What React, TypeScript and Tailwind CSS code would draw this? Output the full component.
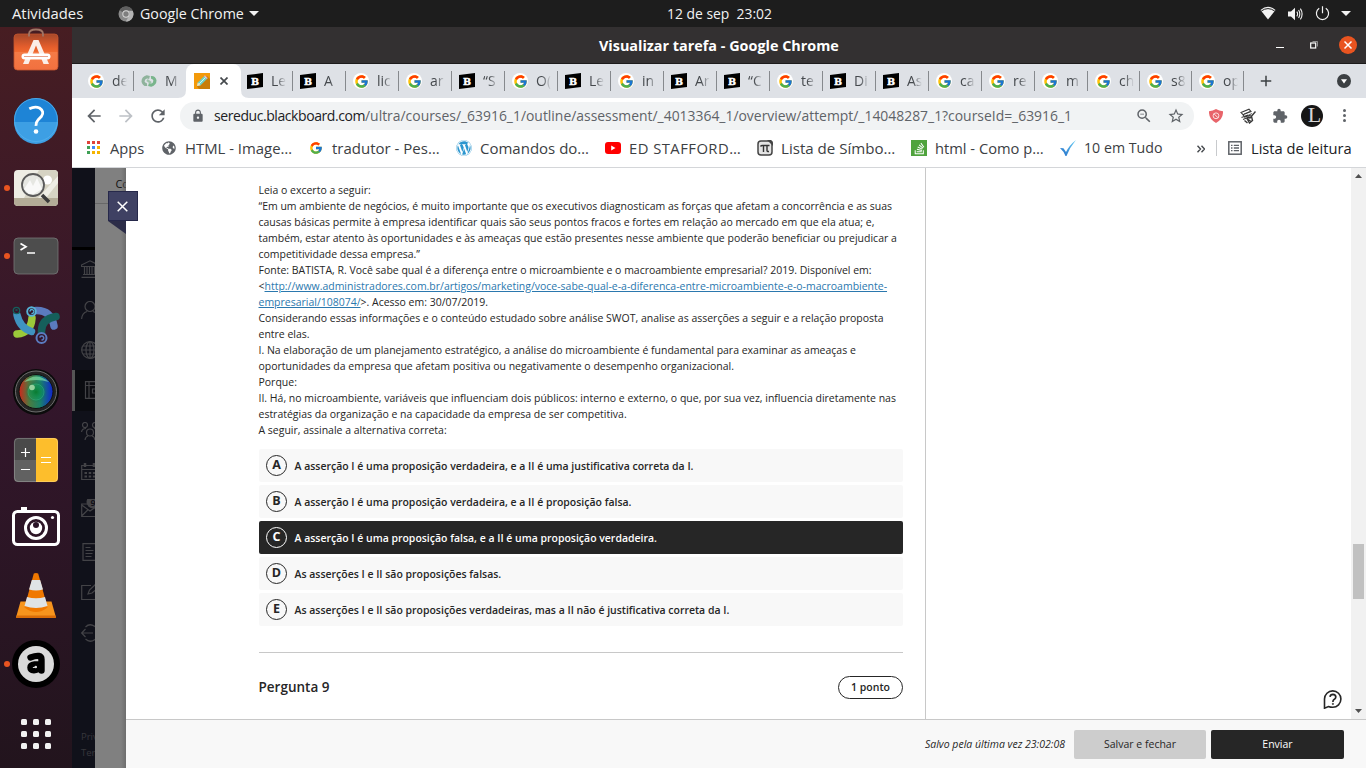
import type { ReactNode } from "react";
import { FcGoogle } from "react-icons/fc";
import { FaWordpress, FaStackOverflow, FaGlobeAmericas } from "react-icons/fa";
import {
  MdLock,
  MdRefresh,
  MdExtension,
  MdStarBorder,
  MdZoomOut,
  MdArrowBack,
  MdArrowForward,
  MdAdd,
} from "react-icons/md";

/* ---------- GNOME top bar ---------- */

function TopBar() {
  return (
    <div className="relative flex h-[27px] shrink-0 items-center bg-[#1d1d1d] text-[#f2f2f2]">
      <span className="ml-3 w-[106px] text-[14.8px] leading-none">Atividades</span>
      <svg className="h-4 w-4" viewBox="0 0 16 16">
        <circle cx="8" cy="8" r="7.5" fill="#8a8a8a" />
        <path d="M8 .5A7.5 7.5 0 0 1 14.8 4.5H8a3.6 3.6 0 0 0-3.2 2L1.6 4A7.5 7.5 0 0 1 8 .5z" fill="#5f5f5f" />
        <path d="M14.8 4.9a7.5 7.5 0 0 1-7 10.6L11 10a4 4 0 0 0 0-5.1z" fill="#b5b5b5" />
        <circle cx="8" cy="8" r="3.7" fill="#d8d8d8" />
        <circle cx="8" cy="8" r="2.7" fill="#7e7e7e" />
      </svg>
      <span className="ml-1.5 w-[104px] pt-px text-[14.25px] leading-none whitespace-nowrap">Google Chrome</span>
      <svg className="ml-[5px] h-[5px] w-[10px]" viewBox="0 0 10 5">
        <path d="M0 0h10L5 5z" fill="#f2f2f2" />
      </svg>
      <span className="absolute left-[667px] text-[13.9px] leading-none whitespace-pre">12 de sep  23:02</span>
      <div className="absolute right-[15px] flex items-center">
        <svg className="h-[15px] w-4" viewBox="0 0 16 15">
          <path d="M0.5 4Q8-2.4 15.5 4L8 13.5z" fill="#f2f2f2" />
          <path d="M1.3 5Q8 .2 14.7 5" fill="none" stroke="#1d1d1d" strokeWidth="1" />
        </svg>
        <svg className="ml-[12px] h-[14px] w-[15px]" viewBox="0 0 15 14">
          <path d="M0 4.5h3L7 .8v12.4L3 9.5H0z" fill="#f2f2f2" />
          <path d="M8.8 4.6q1.6 2.4 0 4.8M10.6 3q2.4 4 0 8M12.4 1.6q3.4 5.4 0 10.8" fill="none" stroke="#f2f2f2" strokeWidth="1.1" />
        </svg>
        <svg className="ml-[12px] h-[15px] w-[15px]" viewBox="0 0 15 15">
          <path d="M4.2 2.3a6.1 6.1 0 1 0 6.6 0M7.5.3v7" fill="none" stroke="#f2f2f2" strokeWidth="1.2" />
        </svg>
        <svg className="ml-[11px] h-[5px] w-[10px]" viewBox="0 0 10 5">
          <path d="M0 0h10L5 5z" fill="#f2f2f2" />
        </svg>
      </div>
    </div>
  );
}

/* ---------- Dock ---------- */

function DockItem({ children, running = false }: { children: ReactNode; running?: boolean }) {
  return (
    <div className="relative flex h-[68px] shrink-0 items-center justify-center">
      {running && <span className="absolute top-[31px] left-1 h-1.5 w-1.5 rounded-full bg-[#e95420]" />}
      <svg className="h-12 w-12" viewBox="0 0 48 48">
        {children}
      </svg>
    </div>
  );
}

function Dock() {
  return (
    <div className="flex w-[72px] shrink-0 flex-col overflow-hidden bg-linear-to-b from-[#471d22] via-[#33162b] via-50% to-[#22141d]">
      <svg className="mx-auto h-[59px] w-12 shrink-0" viewBox="0 0 48 59">
        <defs>
          <linearGradient id="bag" x1="0" y1="0" x2="0" y2="1">
            <stop offset="0" stopColor="#a5482a" />
            <stop offset=".35" stopColor="#e35d2c" />
            <stop offset=".5" stopColor="#f0692f" />
            <stop offset=".51" stopColor="#f47b46" />
            <stop offset="1" stopColor="#f2703f" />
          </linearGradient>
        </defs>
        <rect x="2" y="7" width="44" height="36" rx="3.5" fill="url(#bag)" stroke="#c5552e" strokeWidth=".8" />
        <path d="M17 9.500V7q0-4.500 7-4.500T31 7v2.500" fill="none" stroke="#a07565" strokeWidth="1.800" />
        <path d="M21.500 13h5L37 37h-5.500L24 18.500 16.500 37H11z" fill="#fbeee8" />
        <rect x="9.500" y="26.500" width="29" height="6" rx="3" fill="#fff" />
        <path d="M12 29.500h24" stroke="#e9a18a" strokeWidth="1" />
      </svg>
      <DockItem>
        <circle cx="24" cy="24" r="22" fill="#1e84d6" />
        <path d="M2 26h44a22 22 0 0 1-44 0z" fill="#3d9fe4" />
        <circle cx="24" cy="24" r="21.500" fill="none" stroke="#54b1ee" strokeWidth=".8" />
        <path d="M17.300 12.800Q23 9.800 27.500 12 32.800 15.500 29.500 20.300L26 24Q23.800 26.200 24 29.800" fill="none" stroke="#fff" strokeWidth="2.800" />
        <circle cx="24" cy="35.500" r="2.300" fill="#fff" />
      </DockItem>
      <DockItem running>
        <rect x="2" y="6" width="44" height="36" rx="4" fill="#eeede4" />
        <path d="M27 6h15q4 0 4 4v2L26 34H12z" fill="#d6d3c3" />
        <path d="M34 34L46 19v15z" fill="#d6d3c3" />
        <path d="M2 34h44v4q0 4-4 4H6q-4 0-4-4z" fill="#b3ac97" />
        <circle cx="35.500" cy="16" r="4.500" fill="#fff" />
        <circle cx="21" cy="21" r="11" fill="#e6e7e2" stroke="#5a5a5a" strokeWidth="1.800" />
        <path d="M12 25l6-9 3 6 4-8 5 11-8 5h-5z" fill="#fff" opacity=".75" />
        <path d="M30 31l7 7" stroke="#3b3b3b" strokeWidth="3.600" />
      </DockItem>
      <DockItem running>
        <rect x="2" y="6" width="44" height="36" rx="4" fill="#4d4d4d" stroke="#777" strokeWidth=".8" />
        <path d="M8.500 11.500l5.500 3.200-5.500 3.200" fill="none" stroke="#fff" strokeWidth="1.700" />
        <path d="M15 21h8" stroke="#fff" strokeWidth="1.500" />
      </DockItem>
      <DockItem>
        <g fill="none" strokeLinecap="round" transform="translate(0 -3)">
          <path d="M5 37Q19 36 20 21" stroke="#9bc93a" strokeWidth="7.500" />
          <path d="M24 13.500Q39 13 42 29" stroke="#5b7bbf" strokeWidth="7.500" />
          <path d="M5 18Q8 31 19.500 34.500" stroke="#3f93c0" strokeWidth="7.500" />
          <path d="M44 19.500Q29 22 29.500 35" stroke="#155f5b" strokeWidth="7.500" />
          <circle cx="19.500" cy="14.500" r="4.300" fill="#33162b" stroke="#55b4d8" strokeWidth="1.900" />
          <path d="M18 14a2 2 0 1 1 2 2.500" stroke="#55b4d8" strokeWidth="1.300" />
          <circle cx="29.500" cy="41" r="5" fill="#33162b" stroke="#5b7bbf" strokeWidth="2" />
          <path d="M28 40a2 2 0 1 1 2 3" stroke="#5b7bbf" strokeWidth="1.500" />
          <circle cx="4.500" cy="13.500" r="3.200" fill="#33162b" stroke="#155f5b" strokeWidth="1.300" />
          <path d="M4 13h1" stroke="#155f5b" strokeWidth="1.500" />
        </g>
      </DockItem>
      <DockItem>
        <defs>
          <linearGradient id="lensHue" x1="0" y1="0" x2="1" y2="0">
            <stop offset="0" stopColor="#d0241a" />
            <stop offset=".3" stopColor="#4c7a40" />
            <stop offset=".62" stopColor="#18836a" />
            <stop offset="1" stopColor="#1023cf" />
          </linearGradient>
          <radialGradient id="lensCore">
            <stop offset="0" stopColor="#0a7a30" />
            <stop offset=".6" stopColor="#0a9a50" stopOpacity=".5" />
            <stop offset="1" stopColor="#0a6040" stopOpacity="0" />
          </radialGradient>
        </defs>
        <circle cx="24" cy="24" r="23" fill="#0b0b0b" />
        <circle cx="24" cy="23.500" r="20.500" fill="#242424" stroke="#777" strokeWidth=".9" />
        <circle cx="24" cy="23.500" r="17" fill="url(#lensHue)" stroke="#111" strokeWidth="1" />
        <path d="M12 14Q24 3 37 14 24 10 12 14z" fill="#8df0b0" opacity=".6" />
        <circle cx="24" cy="24" r="11" fill="url(#lensCore)" />
        <circle cx="24" cy="24" r="8" fill="none" stroke="#2fb880" strokeOpacity=".5" strokeWidth="1" />
        <circle cx="20" cy="19.500" r="2.800" fill="#bfe8b8" opacity=".75" />
      </DockItem>
      <DockItem>
        <path d="M24 2H6q-4 0-4 4v18h22z" fill="#4a4a4a" />
        <path d="M2 24h22v22H6q-4 0-4-4z" fill="#616161" />
        <path d="M24 2h18q4 0 4 4v36q0 4-4 4H24z" fill="#fdbe2c" />
        <rect x="2.400" y="2.400" width="43.200" height="43.200" rx="4" fill="none" stroke="#fff" strokeOpacity=".3" strokeWidth=".8" />
        <path d="M9 16.500h9M13.500 12v9M9 33.500h9M29 21.500h10M29 26.500h10" stroke="#fff" strokeWidth="1.200" />
      </DockItem>
      <DockItem>
        <g transform="translate(0 -2)">
          <rect x="1.500" y="9.500" width="45" height="33" rx="4" fill="none" stroke="#fff" strokeWidth="3" />
          <rect x="9" y="5" width="6" height="4" fill="#fff" />
          <circle cx="24" cy="26" r="10.500" fill="none" stroke="#fff" strokeWidth="3" />
          <circle cx="24" cy="26" r="6.200" fill="#fff" />
          <circle cx="24" cy="23" r="3" fill="#2b1427" />
          <circle cx="40.500" cy="15.500" r="1.600" fill="#fff" />
        </g>
      </DockItem>
      <DockItem>
        <path d="M8.500 29.500h31l4.500 16H4z" fill="#f7941d" />
        <path d="M4.500 43.500h39l.500 2.500H4z" fill="#d96c08" />
        <path d="M21.800 1.500q2.200-1.200 4.400 0l9.300 34q-11.500 9-23 0z" fill="#f07800" />
        <path d="M19.800 8h8.400l2.800 9.500q-7 1.800-14 0z" fill="#dfe3e6" />
        <path d="M15 25q9 2.500 18 0l2.500 9q-11.500 4-23 0z" fill="#dfe3e6" />
      </DockItem>
      <DockItem running>
        <circle cx="24" cy="24" r="24" fill="#000" />
        <circle cx="24" cy="24" r="18" fill="#dadada" />
        <path d="M18.500 17.500Q29.500 13.500 29.500 19.500V30.500" fill="none" stroke="#000" strokeWidth="6.400" strokeLinecap="round" />
        <path d="M28.500 24H22.500Q18 24.500 18 27.500t4 3.200Q26 30.700 27.500 28" fill="none" stroke="#000" strokeWidth="5.500" strokeLinecap="round" />
        <circle cx="23.800" cy="27" r="1.200" fill="#dadada" />
      </DockItem>
      <div className="mx-auto mt-[21px] grid grid-cols-3 gap-1.5">
        {Array.from({ length: 9 }, (_, i) => (
          <span key={i} className="h-1.5 w-1.5 rounded-[1.5px] bg-[#f2f2f2]" />
        ))}
      </div>
    </div>
  );
}

/* ---------- Browser chrome ---------- */

function TitleBar() {
  return (
    <div className="flex h-[37px] shrink-0 items-center border-b border-[#1c1b1b] bg-[#333031]">
      <span className="ml-[527px] w-[240px] pt-0.5 text-[14.4px] leading-none font-bold whitespace-nowrap text-white">
        Visualizar tarefa - Google Chrome
      </span>
      <span className="mt-1 ml-[437px] h-px w-2 bg-white" />
      <svg className="ml-[26px] h-2 w-2" viewBox="0 0 8 8">
        <rect x=".7" y="2" width="5" height="5" fill="none" stroke="#fff" strokeWidth="1.200" />
        <path d="M2.500.5h5v5" fill="none" stroke="#aaa" strokeWidth=".8" />
      </svg>
      <svg className="ml-[21px] h-[18px] w-[18px]" viewBox="0 0 18 18">
        <circle cx="9" cy="9" r="9" fill="#e95420" />
        <path d="M5.500 5.500l7 7M12.500 5.500l-7 7" stroke="#fff" strokeWidth="1.500" />
      </svg>
    </div>
  );
}

function GoogleMark() {
  return (
    <span className="flex h-4 w-4 shrink-0 items-center justify-center rounded-full bg-white">
      <FcGoogle className="h-[15px] w-[15px]" />
    </span>
  );
}

function BrainlyMark() {
  return (
    <svg className="h-4 w-4 shrink-0" viewBox="0 0 16 16">
      <path d="M0 2L16 0v14L0 16z" fill="#000" />
      <text x="8" y="11.500" textAnchor="middle" fontFamily="DejaVu Serif" fontWeight="bold" fontSize="9.500" fill="#fff" stroke="#fff" strokeWidth=".4">
        B
      </text>
    </svg>
  );
}

function LoopMark() {
  return (
    <svg className="h-4 w-4 shrink-0" viewBox="0 0 16 16">
      <g fill="none" strokeWidth="3">
        <path d="M8.500 4.500L6 3.800Q2 5 2 8.500q1 3.500 4 3" stroke="#8fb39c" />
        <path d="M7.500 11.500l2.500.7q4-1.200 4-4.700-1-3.500-4-3" stroke="#79b58c" />
        <path d="M6 7l4 3" stroke="#9fc3aa" strokeWidth="2.200" />
      </g>
    </svg>
  );
}

const tabs: { icon: "g" | "b" | "m" | "active"; label: string }[] = [
  { icon: "g", label: "de" },
  { icon: "m", label: "M" },
  { icon: "active", label: "" },
  { icon: "b", label: "Le" },
  { icon: "b", label: "A" },
  { icon: "g", label: "lic" },
  { icon: "g", label: "ar" },
  { icon: "b", label: "“S" },
  { icon: "g", label: "O(" },
  { icon: "b", label: "Le" },
  { icon: "g", label: "in" },
  { icon: "b", label: "Ar" },
  { icon: "b", label: "“C" },
  { icon: "g", label: "te" },
  { icon: "b", label: "Di" },
  { icon: "b", label: "As" },
  { icon: "g", label: "ca" },
  { icon: "g", label: "re" },
  { icon: "g", label: "m" },
  { icon: "g", label: "ch" },
  { icon: "g", label: "s8" },
  { icon: "g", label: "op" },
];

function TabStrip() {
  return (
    <div className="flex h-[34px] shrink-0 items-center bg-[#dee1e6] pl-[9px]">
      {tabs.map((t, i) =>
        t.icon === "active" ? (
          <div key={i} className="relative -mr-px -ml-px flex h-full w-[55px] items-center rounded-t-lg bg-white pl-2">
            <svg className="absolute bottom-0 -left-2 h-2 w-2" viewBox="0 0 8 8">
              <path d="M8 0v8H0q8 0 8-8z" fill="#fff" />
            </svg>
            <svg className="absolute -right-2 bottom-0 h-2 w-2" viewBox="0 0 8 8">
              <path d="M0 0v8h8q-8 0-8-8z" fill="#fff" />
            </svg>
            <svg className="h-4 w-4" viewBox="0 0 16 16">
              <path d="M0 0h16v16H0z" fill="#f39a0a" />
              <path d="M3 13.500L5 16h11V6l-3-3z" fill="#c87d09" />
              <path d="M3 13l.8-3.600 7-7 2.800 2.800-7 7z" fill="#6fd0c4" />
              <path d="M3 13l.8-3.600 2.800 2.800z" fill="#f7e2bd" />
              <path d="M10 3.200l.9-.9 2.800 2.800-.9.900z" fill="#f4a8b4" />
              <path d="M5.200 10.800l6.400-6.400" stroke="#d8f6f1" strokeWidth="1" />
            </svg>
            <svg className="ml-[10px] h-2 w-2" viewBox="0 0 8 8">
              <path d="M.5.5l7 7M7.500.5l-7 7" stroke="#45494d" strokeWidth="1.700" />
            </svg>
          </div>
        ) : (
          <div
            key={i}
            className={
              (i > 18 ? "w-[52px] " : "w-[53px] ") +
              (i === 1 ? "" : "border-r border-[#86898d] ") +
              "flex h-5 shrink-0 items-center pl-[7px]"
            }
          >
            {t.icon === "g" && <GoogleMark />}
            {t.icon === "b" && <BrainlyMark />}
            {t.icon === "m" && <LoopMark />}
            <span className="ml-2 w-[15px] overflow-hidden mask-r-from-40% text-[14px] leading-5 whitespace-nowrap text-[#45494d]">
              {t.label}
            </span>
          </div>
        ),
      )}
      <MdAdd className="ml-[13px] h-[18px] w-[18px] text-[#3c4043]" />
      <svg className="ml-[62px] h-[14px] w-[14px]" viewBox="0 0 14 14">
        <circle cx="7" cy="7" r="7" fill="#3c4043" />
        <path d="M4 5.200h6L7 9.500z" fill="#fff" />
      </svg>
    </div>
  );
}

function Toolbar() {
  return (
    <div className="flex h-[35px] shrink-0 items-center bg-white text-[#5f6368]">
      <MdArrowBack className="ml-3 h-5 w-5" />
      <MdArrowForward className="ml-3 h-5 w-5 text-[#bdc1c6]" />
      <MdRefresh className="ml-3 h-5 w-5" />
      <div className="ml-3 flex h-7 w-[1014px] items-center rounded-full bg-[#f1f3f4]">
        <MdLock className="ml-[11px] h-[14px] w-[14px]" />
        <span className="ml-[9px] w-[151px] text-sm leading-none tracking-[-0.43px] whitespace-nowrap text-[#202124]">
          sereduc.blackboard.com
        </span>
        <span className="w-[706px] text-[13.91px] leading-none whitespace-nowrap">
          /ultra/courses/_63916_1/outline/assessment/_4013364_1/overview/attempt/_14048287_1?courseId=_63916_1
        </span>
        <MdZoomOut className="ml-[64px] h-[18px] w-[18px]" />
        <MdStarBorder className="ml-[14px] h-[18px] w-[18px]" />
      </div>
      <svg className="ml-[15px] h-[14px] w-[14px]" viewBox="0 0 14 14">
        <path d="M7 0q3 2 7 2.200Q14.500 10 7 14-.5 10 0 2.200 4 2 7 0z" fill="#e8646a" />
        <circle cx="7" cy="6.800" r="2.900" fill="none" stroke="#fbdcdc" strokeWidth="1" />
        <path d="M5 4.800l4 4" stroke="#fbdcdc" strokeWidth="1" />
      </svg>
      <svg className="ml-[17px] h-4 w-4" viewBox="0 0 16 16" fill="none" stroke="#3a3a3a">
        <path d="M1 4.500L9 1.200l2 2.300-8 3.200zM3 6.700l1.500 2.500L11 7M1.500 9.500L8 7M3 11.500L9 9" strokeWidth="1.100" />
        <path d="M4 6l6-2.500M5.500 8.500L12 5.500" strokeWidth=".8" />
        <path d="M15.500 3.500L9.500 10.500M10 9L7 10.500l2.500 4.500 3-2.500L11.500 8.500M7.500 11l3.500 2.500M4.500 12.500l3 2.500" strokeWidth="1.400" />
      </svg>
      <MdExtension className="ml-4 h-4 w-4" />
      <svg className="ml-[13px] h-[22px] w-[22px]" viewBox="0 0 22 22">
        <circle cx="11" cy="11" r="11" fill="#161616" />
        <text x="13.500" y="17" fontFamily="Liberation Serif" fontSize="22" textAnchor="middle" fill="#d8d8d8">
          L
        </text>
      </svg>
      <div className="ml-5 flex flex-col gap-[2px]">
        <span className="h-[3px] w-[3px] rounded-full bg-[#5f6368]" />
        <span className="h-[3px] w-[3px] rounded-full bg-[#5f6368]" />
        <span className="h-[3px] w-[3px] rounded-full bg-[#5f6368]" />
      </div>
    </div>
  );
}

const appColors = [
  "bg-[#e0423a]", "bg-[#e0423a]", "bg-[#e0423a]",
  "bg-[#3fa055]", "bg-[#4285f4]", "bg-[#f5b400]",
  "bg-[#3fa055]", "bg-[#f5b400]", "bg-[#f5b400]",
];

function BookmarksBar() {
  const label = "pt-px whitespace-nowrap text-[14.7px] leading-none";
  return (
    <div className="flex h-[35px] shrink-0 items-center border-b border-[#d4d6d9] bg-white pb-1 pl-[15px] text-[#3c4043]">
      <div className="flex w-[75px] items-center gap-[10px]">
        <div className="grid grid-cols-3 gap-[2px]">
          {appColors.map((c, i) => (
            <span key={i} className={"h-[3px] w-[3px] " + c} />
          ))}
        </div>
        <span className="pt-px text-[14.700px] leading-none">Apps</span>
      </div>
      <div className="flex w-[147px] items-center gap-[9px]">
        <FaGlobeAmericas className="h-[14px] w-[14px] text-[#5f6368]" />
        <span className="pt-px text-[14.900px] leading-none whitespace-nowrap">HTML - Image…</span>
      </div>
      <div className="flex w-[147px] items-center gap-[9px]">
        <FcGoogle className="h-[14px] w-[14px]" />
        <span className="pt-px text-[15px] leading-none whitespace-nowrap">tradutor - Pes…</span>
      </div>
      <div className="flex w-[149px] items-center gap-2">
        <FaWordpress className="h-4 w-4 text-[#2b96cf]" />
        <span className="pt-px text-[15px] leading-none whitespace-nowrap">Comandos do…</span>
      </div>
      <div className="flex w-[152px] items-center gap-2">
        <svg className="h-3 w-4" viewBox="0 0 16 12">
          <rect width="16" height="12" rx="3" fill="#f00" />
          <path d="M6.200 3.500L10.500 6l-4.300 2.500z" fill="#fff" />
        </svg>
        <span className="pt-px text-[14.800px] leading-none tracking-[0.46px] whitespace-nowrap">ED STAFFORD…</span>
      </div>
      <div className="flex w-[154px] items-center gap-2">
        <svg className="h-4 w-4" viewBox="0 0 16 16">
          <rect x="1" y="1" width="14" height="14" rx="3" fill="#e4e4e4" stroke="#444" strokeWidth="1.500" />
          <path d="M10 0h4q2 1 2 3v3z" fill="#444" />
          <path d="M3.500 6.500Q4 5.500 5.500 5.500h7M6.500 5.500V12M10 5.500v5q0 1.200 2 1" fill="none" stroke="#333" strokeWidth="1.400" />
        </svg>
        <span className="pt-px text-[15.100px] leading-none whitespace-nowrap">Lista de Símbo…</span>
      </div>
      <div className="flex w-[149px] items-center gap-2">
        <span className="flex h-4 w-4 items-center justify-center bg-[#4fa33d]">
          <FaStackOverflow className="h-[13px] w-[13px] text-white" />
        </span>
        <span className={label}>html - Como p…</span>
      </div>
      <div className="flex w-[137px] items-center gap-2">
        <svg className="h-4 w-4" viewBox="0 0 16 16">
          <defs>
            <linearGradient id="tick" x1="0" y1="1" x2="1" y2="0">
              <stop offset="0.2" stopColor="#2f7fd0" />
              <stop offset="1" stopColor="#6fd3f7" />
            </linearGradient>
          </defs>
          <path d="M0 8l3.500.3L6 12Q9.500 5 16 0 10 7 6.500 16q-.5.500-1 0Q3.500 11 0 8z" fill="url(#tick)" />
        </svg>
        <span className="pt-px text-[14.200px] leading-none whitespace-nowrap">10 em Tudo</span>
      </div>
      <svg className="mt-px h-2 w-2" viewBox="0 0 8 8">
        <path d="M.5.800L3.500 4 .5 7.200M4.500.8L7.500 4l-3 3.200" fill="none" stroke="#45494d" strokeWidth="1.400" />
      </svg>
      <span className="ml-[11px] h-4 w-px bg-[#c8cacd]" />
      <svg className="ml-[11px] h-[14px] w-[14px]" viewBox="0 0 14 14">
        <rect x=".8" y=".8" width="12.400" height="12.400" fill="none" stroke="#5f6368" strokeWidth="1.500" />
        <path d="M3 4.300h1.500M3 7h1.500M3 9.700h1.500M5.800 4.300H11M5.800 7H11M5.800 9.700H11" stroke="#5f6368" strokeWidth="1.300" />
      </svg>
      <span className="ml-[9px] pt-px text-[14.7px] leading-none whitespace-nowrap text-[#202124]">Lista de leitura</span>
    </div>
  );
}

/* ---------- Page ---------- */

function NavGlyph({ children, active = false }: { children: ReactNode; active?: boolean }) {
  return (
    <div className={"flex h-[40.4px] shrink-0 items-center " + (active ? "border-l-[3px] border-[#555] bg-[#0b0c11] pl-[9px]" : "pl-[9px]")}>
      <svg className="h-[18px] w-[18px] shrink-0" viewBox="0 0 18 18" fill="none" stroke="#434347" strokeWidth="1.2">
        {children}
      </svg>
    </div>
  );
}

function PageBackdrop() {
  return (
    <>
      <div className="flex w-[23px] shrink-0 flex-col overflow-hidden bg-[#10111a]">
        <div className="mb-[-1px] h-[82px] shrink-0 border-b-[3px] border-black" />
        <NavGlyph>
          <path d="M.5 5L9 .8 17.500 5v1.500H.5zM2 14.500h14M.5 17.300h17M3.500 7v7M6 7v7M8.500 7v7M11 7v7M13.500 7v7" />
        </NavGlyph>
        <NavGlyph>
          <circle cx="9" cy="5.500" r="5" />
          <path d="M.6 18Q1 12 6 10.500M17.400 18Q17 12 12 10.500" />
        </NavGlyph>
        <NavGlyph>
          <circle cx="9" cy="9" r="8.300" />
          <ellipse cx="9" cy="9" rx="4" ry="8.300" />
          <path d="M9 .7v16.600M.7 9h16.600M2 5h14M2 13h14" />
        </NavGlyph>
        <NavGlyph active>
          <path d="M1.500.7H17v16.600H1.500zM5 .7v16.600M2 4.500h15M16 8H8.500v4H16" />
        </NavGlyph>
        <NavGlyph>
          <circle cx="4" cy="3" r="2.500" />
          <circle cx="14" cy="3" r="2.500" />
          <circle cx="9" cy="10.500" r="3.500" />
          <path d="M.5 10Q1 6.500 5 6.500M17.500 10Q17 6.500 13 6.500M4 18q.5-3.500 3-4M14 18q-.5-3.500-3-4" />
        </NavGlyph>
        <NavGlyph>
          <path d="M.7 3.500h16.600v14H.7zM.7 7.500h16.600" />
          <path d="M4 1v4M13 1v4" strokeWidth="2.500" />
          <path d="M3.500 11h11M3.500 14.500h11" strokeWidth="2" strokeDasharray="2.500 1.700" />
        </NavGlyph>
        <div className="relative -top-1">
          <NavGlyph>
            <path d="M.7 5h16.600v12.500H.7zM.7 6L9 12l8.300-6M.7 17l6-6" />
            <circle cx="12" cy="3" r="6.500" fill="#434347" stroke="none" />
            <text x="9.500" y="6.500" fontSize="9" fontWeight="bold" fill="#10111a" stroke="none">9</text>
          </NavGlyph>
        </div>
        <NavGlyph>
          <path d="M2 .7h14v16.600H2zM4.500 4.500h5M4.500 7.500h8M4.500 10.500h7M4.500 13.500h6" />
        </NavGlyph>
        <NavGlyph>
          <path d="M10 2.500H.7v14H15V10M7 11l1.500-4L15 1l3 3-7 6z" />
        </NavGlyph>
        <NavGlyph>
          <path d="M.7 9H12M4.500 5L.7 9l3.800 4M4.500 3Q9-1.500 14.500 3M4.500 15q4.500 4.500 10 0" />
        </NavGlyph>
        <div className="mt-auto pb-[7px] pl-[9px] text-[9.500px] leading-4 text-[#37373c]">
          <div className="w-10">Priva</div>
          <div className="w-10">Term</div>
        </div>
      </div>
      <div className="relative w-[31px] shrink-0 bg-[#808080]">
        <div className="h-9 overflow-hidden border-b border-[#686868] pt-[9px] pl-[20.500px] text-[11px] leading-[14px] tracking-[-0.3px] whitespace-nowrap text-[#111]">
          Conteúdo
        </div>
        <div className="absolute inset-y-0 right-0 w-[5px] bg-linear-to-r from-transparent to-[#666]/70" />
        <svg className="absolute top-[53px] left-[13px] h-[13px] w-[18px]" viewBox="0 0 18 13">
          <path d="M0 0h18v13z" fill="#2c2d48" />
        </svg>
        <div className="absolute top-[23px] left-[13px] z-10 flex h-[30px] w-[30px] items-center justify-center border border-[#26284a] bg-[#3f4163]">
          <svg className="mr-px h-[11px] w-[11px]" viewBox="0 0 11 11">
            <path d="M.7.7l9.600 9.600M10.300.7L.7 10.300" stroke="#fff" strokeWidth="1.500" />
          </svg>
        </div>
      </div>
    </>
  );
}

const link = "text-[#2b78ae] underline underline-offset-1";

function Question() {
  return (
    <div className="pt-[14px] text-[10.49px] leading-4 whitespace-nowrap text-[#262626]">
      <p>Leia o excerto a seguir:</p>
      <p>“Em um ambiente de negócios, é muito importante que os executivos diagnosticam as forças que afetam a concorrência e as suas</p>
      <p>causas básicas permite à empresa identificar quais são seus pontos fracos e fortes em relação ao mercado em que ela atua; e,</p>
      <p>também, estar atento às oportunidades e às ameaças que estão presentes nesse ambiente que poderão beneficiar ou prejudicar a</p>
      <p>competitividade dessa empresa.”</p>
      <p>Fonte: BATISTA, R. Você sabe qual é a diferença entre o microambiente e o macroambiente empresarial? 2019. Disponível em:</p>
      <p>
        &lt;<a className={link}>http://www.administradores.com.br/artigos/marketing/voce-sabe-qual-e-a-diferenca-entre-microambiente-e-o-macroambiente-</a>
      </p>
      <p>
        <a className={link}>empresarial/108074/</a>&gt;. Acesso em: 30/07/2019.
      </p>
      <p>Considerando essas informações e o conteúdo estudado sobre análise SWOT, analise as asserções a seguir e a relação proposta</p>
      <p>entre elas.</p>
      <p>I. Na elaboração de um planejamento estratégico, a análise do microambiente é fundamental para examinar as ameaças e</p>
      <p>oportunidades da empresa que afetam positiva ou negativamente o desempenho organizacional.</p>
      <p>Porque:</p>
      <p>II. Há, no microambiente, variáveis que influenciam dois públicos: interno e externo, o que, por sua vez, influencia diretamente nas</p>
      <p>estratégias da organização e na capacidade da empresa de ser competitiva.</p>
      <p>A seguir, assinale a alternativa correta:</p>
    </div>
  );
}

const options = [
  ["A", "A asserção I é uma proposição verdadeira, e a II é uma justificativa correta da I."],
  ["B", "A asserção I é uma proposição verdadeira, e a II é proposição falsa."],
  ["C", "A asserção I é uma proposição falsa, e a II é uma proposição verdadeira."],
  ["D", "As asserções I e II são proposições falsas."],
  ["E", "As asserções I e II são proposições verdadeiras, mas a II não é justificativa correta da I."],
];

function Options() {
  return (
    <div className="mt-[11px] flex flex-col gap-[3px]">
      {options.map(([letter, text]) => (
        <div
          key={letter}
          className={
            "flex h-[33px] items-center rounded-[2px] pl-[7px] font-semibold " +
            (letter === "C" ? "bg-[#262626] text-white" : "bg-[#f8f8f8] text-[#262626]")
          }
        >
          <span className="flex h-[21px] w-[21px] items-center justify-center rounded-full border border-current pl-px text-[12.500px] leading-none font-bold">
            {letter}
          </span>
          <span className="ml-2 pt-px text-[10.48px] leading-4 whitespace-nowrap">{text}</span>
        </div>
      ))}
    </div>
  );
}

function Assessment() {
  return (
    <div className="flex min-w-0 grow flex-col bg-white">
      <div className="flex h-[551px] shrink-0 overflow-hidden">
        <div className="w-[800px] shrink-0 border-r border-[#c8c8c8] pr-[22px] pl-[132.5px]">
          <Question />
          <Options />
          <div className="mt-[26px] flex h-[69px] items-center justify-between border-t border-[#c8c8c8]">
            <span className="pt-0.5 text-[13.500px] leading-none font-semibold text-[#262626]">Pergunta 9</span>
            <span className="flex h-[23px] w-[65px] items-center justify-center rounded-full border border-[#262626] text-[10.500px] leading-none font-semibold text-[#262626]">
              1 ponto
            </span>
          </div>
        </div>
        <div className="flex grow items-end justify-end">
          <svg className="mr-[9px] mb-[10px] h-[19px] w-[19px]" viewBox="0 0 19 19" fill="none" stroke="#262626">
            <path d="M1.500 18.200V9A8.200 8.200 0 1 1 9.800 17.300Q7.400 17.300 5.400 16.500L1.500 18.200z" strokeWidth="1.600" />
            <path d="M7 6.800Q7.400 4.300 9.900 4.300q2.800.2 2.900 2.600 0 1.500-1.700 2.500Q9.900 10.200 9.900 12" strokeWidth="1.700" />
            <circle cx="9.900" cy="13.900" r=".7" fill="#262626" strokeWidth=".6" />
          </svg>
        </div>
        <div className="flex w-[15px] shrink-0 flex-col items-center bg-[#f1f1f1]">
          <svg className="mt-[6px] h-1 w-[7px]" viewBox="0 0 7 4">
            <path d="M0 4h7L3.500 0z" fill="#505050" />
          </svg>
          <div className="mt-[366px] h-[55px] w-[11px] bg-[#c1c1c1]" />
          <svg className="mt-[110px] h-1 w-[7px]" viewBox="0 0 7 4">
            <path d="M0 0h7L3.500 4z" fill="#505050" />
          </svg>
        </div>
      </div>
      <div className="flex grow items-center justify-end border-t border-[#c8c8c8] bg-[#f8f8f8] pr-[22px] text-[10.5px] leading-none text-[#262626]">
        <span className="mr-[9px] whitespace-nowrap italic">Salvo pela última vez 23:02:08</span>
        <button className="mr-[5px] h-[29px] w-[132px] rounded-[2px] bg-[#cdcdcd]">Salvar e fechar</button>
        <button className="h-[29px] w-[133px] rounded-[2px] bg-[#262626] text-white">Enviar</button>
      </div>
    </div>
  );
}

export default function App() {
  return (
    <div className="flex h-[768px] w-[1366px] flex-col overflow-hidden bg-white font-['Open_Sans','Noto_Sans',sans-serif]">
      <TopBar />
      <div className="flex min-h-0 grow">
        <Dock />
        <div className="flex min-w-0 grow flex-col">
          <TitleBar />
          <TabStrip />
          <Toolbar />
          <BookmarksBar />
          <div className="flex min-h-0 grow">
            <PageBackdrop />
            <Assessment />
          </div>
        </div>
      </div>
    </div>
  );
}
